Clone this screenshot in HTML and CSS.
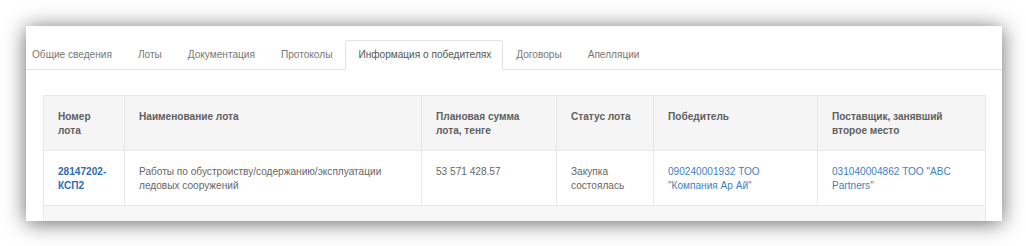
FILE: index.html
```html
<!DOCTYPE html>
<html lang="ru">
<head>
<meta charset="utf-8">
<link rel="stylesheet" href="styles.css">
</head>
<body>
<div class="panel">
  <ul class="tabs">
    <li class="tab">Общие сведения</li>
    <li class="tab">Лоты</li>
    <li class="tab">Документация</li>
    <li class="tab">Протоколы</li>
    <li class="tab active">Информация о победителях</li>
    <li class="tab">Договоры</li>
    <li class="tab">Апелляции</li>
  </ul>
  <table class="grid">
    <colgroup>
      <col class="c1"><col class="c2"><col class="c3"><col class="c4"><col class="c5"><col class="c6">
    </colgroup>
    <thead>
      <tr>
        <th>Номер<br>лота</th>
        <th>Наименование лота</th>
        <th>Плановая сумма<br>лота, тенге</th>
        <th>Статус лота</th>
        <th>Победитель</th>
        <th>Поставщик, занявший<br>второе место</th>
      </tr>
    </thead>
    <tbody>
      <tr>
        <td><a class="lot">28147202-<br>КСП2</a></td>
        <td>Работы по обустроиству/содержанию/эксплуатации<br>ледовых сооружений</td>
        <td>53 571 428.57</td>
        <td>Закупка<br>состоялась</td>
        <td><a class="link">090240001932 ТОО<br>"Компания Ар Ай"</a></td>
        <td><a class="link">031040004862 ТОО "ABC<br>Partners"</a></td>
      </tr>
      <tr class="empty">
        <td colspan="6"></td>
      </tr>
    </tbody>
  </table>
</div>
</body>
</html>
```
FILE: styles.css
```css
html, body {
  margin: 0;
  padding: 0;
  background: #fff;
}
body {
  font-family: "Liberation Sans", Arial, sans-serif;
  width: 1026px;
  height: 246px;
  overflow: hidden;
}
.panel {
  margin: 26px 0 0 26px;
  width: 976px;
  height: 195px;
  background: #fff;
  overflow: hidden;
  box-shadow: 0 2px 20px rgba(0, 0, 0, 0.6);
}
.tabs {
  list-style: none;
  margin: 14px 0 0 0;
  padding: 0;
  display: flex;
  border-bottom: 1px solid #e3e3e3;
  height: 29px;
}
.tab {
  font-size: 10.1px;
  color: #777;
  padding: 0 12px;
  line-height: 28px;
  height: 29px;
  box-sizing: border-box;
  border: 1px solid transparent;
  border-bottom: none;
  white-space: nowrap;
}
.tab:first-child {
  padding-left: 5px;
}
.tab.active {
  color: #555;
  background: #fff;
  border-color: #e3e3e3;
  border-radius: 3px 3px 0 0;
  height: 30px;
  padding: 0 11px 0 12px;
  margin-bottom: -1px;
}
.grid {
  margin: 25px 0 0 17px;
  width: 942px;
  border-collapse: collapse;
  table-layout: fixed;
  font-size: 10.1px;
  line-height: 14px;
}
.c1 { width: 81px; }
.c2 { width: 297px; }
.c3 { width: 135px; }
.c4 { width: 97px; }
.c5 { width: 164px; }
.c6 { width: 168px; }
.grid th, .grid td {
  border: 1px solid #e8e8e8;
  padding: 14px 14px 12px;
  text-align: left;
  vertical-align: top;
  color: #666;
}
.grid th {
  background: #f5f5f5;
  font-weight: bold;
  color: #606060;
}
.grid td {
  background: #fff;
}
.grid tr.empty td {
  background: #f7f7f7;
  height: 20px;
  padding: 0;
}
.lot {
  color: #2d6db0;
  font-weight: bold;
}
.link {
  color: #3f7fc0;
}
```
